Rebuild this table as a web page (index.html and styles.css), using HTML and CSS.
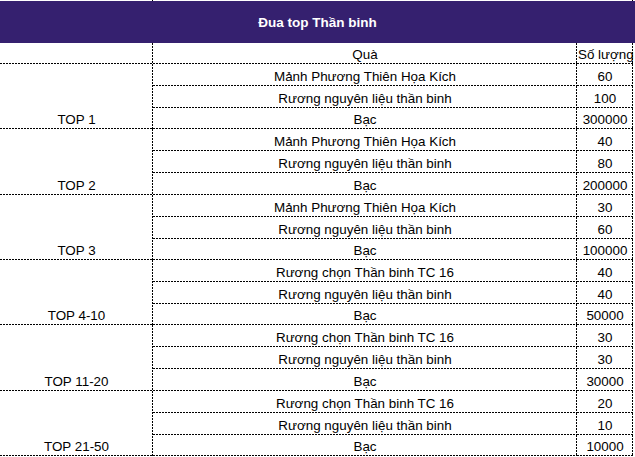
FILE: index.html
```html
<!DOCTYPE html>
<html lang="vi">
<head>
<meta charset="utf-8">
<link rel="stylesheet" href="styles.css">
</head>
<body>
<div class="sheet">
  <div class="topline"><span class="tl"></span><span class="tl none"></span><span class="tl"></span></div>
  <div class="title">Đua top Thần binh</div>
  <div class="grid">
    <div class="cell c1 head"></div>
    <div class="cell c2 head">Quà</div>
    <div class="cell c3 head">Số lượng</div>

    <div class="cell c1 label">TOP 1</div>
    <div class="cell c2">Mảnh Phương Thiên Họa Kích</div><div class="cell c3">60</div>
    <div class="cell c2">Rương nguyên liệu thần binh</div><div class="cell c3">100</div>
    <div class="cell c2">Bạc</div><div class="cell c3">300000</div>

    <div class="cell c1 label">TOP 2</div>
    <div class="cell c2">Mảnh Phương Thiên Họa Kích</div><div class="cell c3">40</div>
    <div class="cell c2">Rương nguyên liệu thần binh</div><div class="cell c3">80</div>
    <div class="cell c2">Bạc</div><div class="cell c3">200000</div>

    <div class="cell c1 label">TOP 3</div>
    <div class="cell c2">Mảnh Phương Thiên Họa Kích</div><div class="cell c3">30</div>
    <div class="cell c2">Rương nguyên liệu thần binh</div><div class="cell c3">60</div>
    <div class="cell c2">Bạc</div><div class="cell c3">100000</div>

    <div class="cell c1 label">TOP 4-10</div>
    <div class="cell c2">Rương chọn Thần binh TC 16</div><div class="cell c3">40</div>
    <div class="cell c2">Rương nguyên liệu thần binh</div><div class="cell c3">40</div>
    <div class="cell c2">Bạc</div><div class="cell c3">50000</div>

    <div class="cell c1 label">TOP 11-20</div>
    <div class="cell c2">Rương chọn Thần binh TC 16</div><div class="cell c3">30</div>
    <div class="cell c2">Rương nguyên liệu thần binh</div><div class="cell c3">30</div>
    <div class="cell c2">Bạc</div><div class="cell c3">30000</div>

    <div class="cell c1 label">TOP 21-50</div>
    <div class="cell c2">Rương chọn Thần binh TC 16</div><div class="cell c3">20</div>
    <div class="cell c2">Rương nguyên liệu thần binh</div><div class="cell c3">10</div>
    <div class="cell c2">Bạc</div><div class="cell c3">10000</div>
  </div>
</div>
</body>
</html>
```
FILE: styles.css
```css
html, body {
  margin: 0;
  padding: 0;
  background: #ffffff;
}
.sheet {
  width: 635px;
  font-family: "Liberation Sans", Arial, sans-serif;
  font-size: 13.4px;
  color: #000;
}
.topline {
  display: grid;
  grid-template-columns: 153px 424px 56px;
  height: 1px;
}
.tl {
  background: linear-gradient(#000, #000) top right / 1px 1px no-repeat;
}
.tl.none {
  background: none;
}
.title {
  height: 42px;
  background: #35206f;
  color: #fff;
  font-weight: bold;
  font-size: 13.5px;
  display: flex;
  align-items: center;
  justify-content: center;
  padding-top: 1px;
  box-sizing: border-box;
}
.grid {
  display: grid;
  grid-template-columns: 153px 424px 56px;
  grid-template-rows: 21px
    22px 22px 21px
    22px 22px 22px
    22px 22px 21px
    22px 22px 21px
    22px 22px 22px
    22px 22px 21px;
}
.cell {
  box-sizing: border-box;
  background-image:
    linear-gradient(to right, #000 2px, transparent 2px),
    linear-gradient(to bottom, #000 2px, transparent 2px);
  background-position: left bottom, right top;
  background-size: 3px 1px, 1px 3px;
  background-repeat: repeat-x, repeat-y;
  display: flex;
  align-items: flex-end;
  justify-content: center;
  line-height: 15px;
  padding-bottom: 2px;
  white-space: nowrap;
}
.cell.c1 { grid-column: 1; }
.cell.label { grid-row: span 3; }
.cell.c2 { grid-column: 2; }
.cell.c3 { grid-column: 3; }
.cell.c3.head { justify-content: flex-start; padding-left: 1px; }
```
